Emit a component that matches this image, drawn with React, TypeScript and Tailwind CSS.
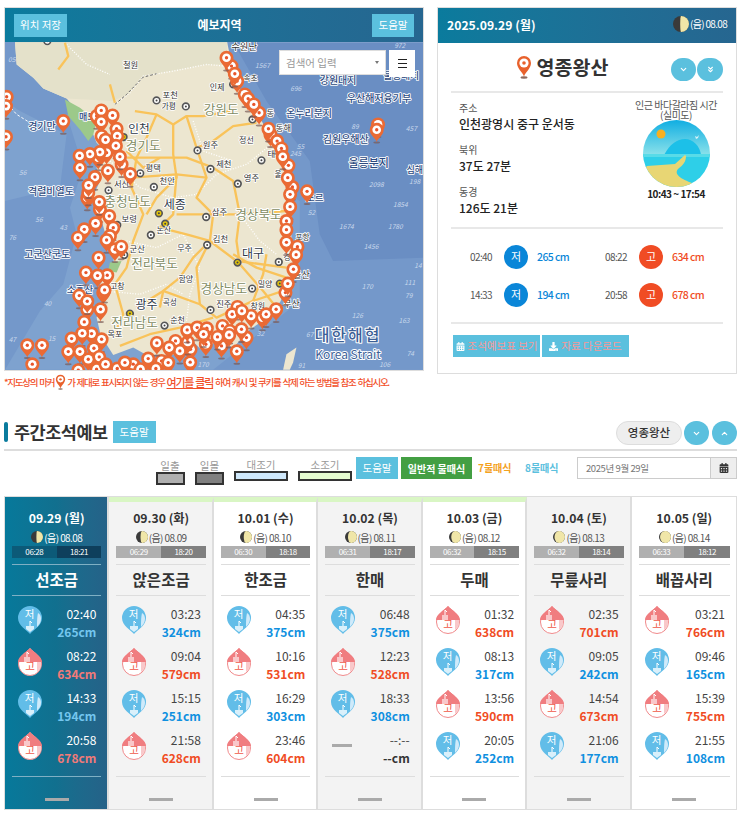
import { ChevronDown, ChevronUp, ChevronsDown } from "lucide-react";
import { FaCalendarAlt, FaDownload } from "react-icons/fa";

const FONT = "font-['Noto_Sans_CJK_KR','Noto_Sans',sans-serif]";

const PINS: [number, number][] = [
  [20, 287], [18, 315], [18, 407], [190, 360], [290, 345], [338, 343], [304, 328], [304, 362], [350, 383], [305, 405], [352, 405], [317, 416],
  [320, 455], [348, 434], [365, 490], [360, 467], [295, 470], [300, 453], [270, 459], [239, 464], [240, 500], [324, 509], [391, 519], [285, 528],
  [262, 590], [265, 575], [266, 553], [300, 625], [298, 603], [328, 645], [287, 667], [253, 685], [234, 710], [340, 680], [330, 705], [320, 717],
  [345, 745], [364, 737], [296, 770], [258, 815], [322, 823], [293, 824], [310, 875], [314, 867], [238, 884], [262, 925], [262, 901], [302, 925], [253, 963],
  [695, 195], [680, 170], [712, 240], [705, 218], [735, 280], [745, 293], [778, 335], [762, 310], [812, 400], [806, 383], [832, 420], [845, 442], [866, 493],
  [849, 467], [878, 558], [864, 530], [871, 580], [871, 617], [860, 660], [860, 686], [893, 737], [860, 724], [889, 761], [881, 805], [857, 875], [864, 848],
  [829, 925], [788, 950], [799, 940], [754, 945], [713, 918], [697, 940], [726, 930], [922, 571], [1135, 370], [1131, 386],
  [82, 1033], [126, 1033], [97, 1090], [215, 1013], [275, 998], [247, 997], [305, 1015], [205, 1052], [282, 1042], [240, 1052], [298, 1068], [265, 1075],
  [235, 1108], [290, 1105], [317, 1090], [352, 1103], [400, 1090], [375, 1085], [422, 1105], [445, 1073], [485, 1080], [468, 1103], [471, 1026], [527, 1020],
  [572, 1045], [540, 1050], [508, 1040], [564, 1023], [505, 1085], [571, 1084], [562, 987], [592, 980], [621, 982], [618, 1030], [611, 1000], [668, 975],
  [665, 1035], [653, 1008], [690, 990], [688, 1002], [740, 1010], [725, 985], [711, 1051],
];

const CITIES: [number, number, boolean][] = [
  [142, 120, false], [700, 250, false], [470, 298, false], [558, 316, false], [758, 355, false], [805, 400, false], [593, 448, false], [632, 504, false],
  [714, 548, false], [785, 478, false], [421, 517, false], [462, 558, false], [326, 568, false], [352, 672, false], [453, 702, false], [619, 648, false],
  [622, 732, false], [373, 762, false], [837, 783, false], [757, 863, false], [632, 927, false], [494, 974, false], [371, 408, true], [477, 637, true],
  [496, 668, true], [713, 785, true], [840, 848, true], [390, 938, true],
];

// x, y, size, text
const CITY_LABELS: [number, number, number, string][] = [
  [733, 137, 28, "수원난"], [392, 193, 25, "철원"], [752, 232, 23, "속초"], [652, 258, 24, "인제"], [511, 282, 25, "포천"], [507, 316, 23, "가평"], [812, 337, 25, "동"],
  [851, 381, 25, "동해"], [740, 416, 24, "정선"], [632, 432, 25, "원주"], [815, 459, 25, "태"], [672, 488, 25, "제천"], [460, 500, 25, "평택"], [755, 530, 25, "영주"],
  [502, 541, 25, "천안"], [835, 520, 23, "울"], [365, 550, 25, "서산"], [388, 654, 25, "보령"], [659, 632, 25, "삼주"], [492, 686, 24, "논산"], [554, 742, 24, "무주"],
  [662, 714, 25, "김천"], [412, 743, 25, "군산"], [558, 834, 24, "함양"], [352, 854, 24, "고창"], [796, 848, 24, "밀양"], [510, 904, 23, "곡성"], [672, 910, 25, "진주"],
  [774, 916, 24, "창원"], [533, 958, 24, "순천"], [345, 1000, 24, "목포"], [905, 822, 27, "울산"], [875, 910, 27, "부산"], [862, 768, 23, "경"], [908, 708, 23, "포항"],
];
const BIG_CITIES: [number, number, number, string][] = [
  [417, 385, 35, "인천"], [525, 613, 36, "세종"], [760, 758, 36, "대구"], [440, 912, 36, "광주"],
];
const PROVINCES: [number, number, string][] = [
  [430, 433, "경기도"], [664, 325, "강원도"], [383, 603, "충청남도"], [776, 642, "경상북도"], [464, 788, "전라북도"], [672, 862, "경상남도"], [404, 965, "전라남도"],
];
const SEA_LABELS: [number, number, number, string][] = [
  [126, 378, 30, "경기만"], [262, 347, 27, "매도"], [153, 572, 30, "격렬비열도"], [142, 762, 30, "고군산군도"], [240, 865, 29, "소흑산"], [1015, 240, 30, "강원대지"],
  [1138, 292, 30, "우산해저융기부"], [928, 337, 30, "온누리분지"], [1038, 417, 30, "김원우해산"], [1107, 489, 33, "울릉분지"], [1205, 225, 29, "울릉대지"], [945, 590, 29, "포르"], [1245, 505, 27, "심해"],
];
const DEPTHS: [number, number, string][] = [
  [788, 195, "1567"], [1200, 135, "972"], [888, 262, "696"], [1066, 378, "89"], [1235, 382, "457"], [902, 436, "55"], [887, 458, "245"], [1130, 550, "2098"], [1245, 543, "198"],
  [68, 515, "56"], [117, 657, "56"], [190, 680, "43"], [37, 710, "76"], [935, 636, "52"], [1202, 612, "1854"], [1040, 678, "1674"], [1187, 677, "1780"], [1114, 737, "1456"],
  [1255, 795, "14"], [1103, 857, "170"], [1230, 845, "111"], [1227, 885, "79"], [143, 907, "40"], [1073, 945, "126"], [1213, 958, "163"], [37, 1015, "47"], [155, 1012, "15"],
  [1232, 1057, "74"], [1155, 1090, "106"], [905, 1095, "91"], [610, 1090, "170"], [782, 997, "32"], [930, 1000, "67"], [35, 175, "05"],
];
const ROADS = [
  "M195 125 L205 165 L175 205", "M330 250 L345 305", "M405 330 L470 340 L520 370 L560 345 L610 345 L690 330",
  "M470 340 L440 410 L410 470 L395 560 L430 640 L400 720 L380 800 L345 850 L370 940 L340 1010",
  "M520 370 L520 460 L530 530 L470 590 L440 640", "M560 345 L590 440 L620 530 L590 590 L640 640 L630 720 L590 800 L600 910",
  "M770 365 L700 375 L640 420 L590 440", "M380 470 L470 470 L560 470 L640 500 L700 540 L720 640 L710 720 L720 790 L790 870 L830 920",
  "M395 530 L530 520 L620 530", "M530 640 L640 640 L720 640 L860 630", "M480 680 L560 700 L630 720 L710 780 L860 800",
  "M630 720 L580 770 L540 830 L490 870 L480 920", "M410 920 L490 870 L600 910 L650 950 L760 900 L850 870", "M360 1035 L450 1000 L540 980 L640 950",
  "M700 760 L770 800 L860 830", "M380 450 L430 500 L480 470", "M760 900 L790 820 L800 760", "M530 520 L520 640 L480 680",
];
const BORDERS = [
  "M345 310 L390 275 L430 225 L520 210 L620 190 L675 195", "M330 480 L420 560 L520 590 L590 580 L650 520 L740 490 L840 410",
  "M580 360 L610 450 L700 480", "M380 720 L470 740 L550 700 L600 800 L570 880 L560 960", "M310 870 L420 880 L500 850 L550 880",
  "M720 640 L780 720 L830 760", "M200 130 L260 190 L330 220",
];

type Tide = { low: boolean; time: string; cm: string };
type Day = { date: string; lunar: string; rx: number; rise: string; set: string; name: string; strip: boolean; tone: string; tides: Tide[] };

const t = (low: boolean, time: string, cm: string): Tide => ({ low, time, cm });
const DAYS: Day[] = [
  { date: "09.29 (월)", lunar: "08.08", rx: 0.8, rise: "06:28", set: "18:21", name: "선조금", strip: false, tone: "today", tides: [t(true, "02:40", "265cm"), t(false, "08:22", "634cm"), t(true, "14:33", "194cm"), t(false, "20:58", "678cm")] },
  { date: "09.30 (화)", lunar: "08.09", rx: 2, rise: "06:29", set: "18:20", name: "앉은조금", strip: true, tone: "bg-[#f3f3f3]", tides: [t(true, "03:23", "324cm"), t(false, "09:04", "579cm"), t(true, "15:15", "251cm"), t(false, "21:58", "628cm")] },
  { date: "10.01 (수)", lunar: "08.10", rx: 3, rise: "06:30", set: "18:18", name: "한조금", strip: true, tone: "bg-white", tides: [t(true, "04:35", "375cm"), t(false, "10:16", "531cm"), t(true, "16:29", "303cm"), t(false, "23:46", "604cm")] },
  { date: "10.02 (목)", lunar: "08.11", rx: 4, rise: "06:31", set: "18:17", name: "한매", strip: true, tone: "bg-[#f3f3f3]", tides: [t(true, "06:48", "375cm"), t(false, "12:23", "528cm"), t(true, "18:33", "308cm")] },
  { date: "10.03 (금)", lunar: "08.12", rx: 5, rise: "06:32", set: "18:15", name: "두매", strip: true, tone: "bg-white", tides: [t(false, "01:32", "638cm"), t(true, "08:13", "317cm"), t(false, "13:56", "590cm"), t(true, "20:05", "252cm")] },
  { date: "10.04 (토)", lunar: "08.13", rx: 6, rise: "06:32", set: "18:14", name: "무릎사리", strip: false, tone: "bg-[#f3f3f3]", tides: [t(false, "02:35", "701cm"), t(true, "09:05", "242cm"), t(false, "14:54", "673cm"), t(true, "21:06", "177cm")] },
  { date: "10.05 (일)", lunar: "08.14", rx: 6.6, rise: "06:33", set: "18:12", name: "배꼽사리", strip: false, tone: "bg-white", tides: [t(false, "03:21", "766cm"), t(true, "09:46", "165cm"), t(false, "15:39", "755cm"), t(true, "21:55", "108cm")] },
];

const MoonIcon = ({ rx, className }: { rx: number; className: string }) => (
  <svg viewBox="0 0 16 16" className={className}>
    <circle cx="8" cy="8" r="8" fill="#3a3a3a" />
    <path d="M8 0a8 8 0 0 1 0 16z" fill="#f0e6a8" />
    <ellipse cx="8" cy="8" rx={rx} ry="8" fill="#f0e6a8" />
  </svg>
);

const PinIcon = ({ className }: { className: string }) => (
  <svg viewBox="0 0 16 24" className={className}>
    <ellipse cx="8" cy="22.5" rx="3.5" ry="1.2" fill="#8d6a5e" />
    <path d="M8 21.5C6.5 17 1 13.5 1 8a7 7 0 0 1 14 0c0 5.500-5.500 9-7 13.500z" fill="#e8612c" />
    <circle cx="8" cy="8" r="4.6" fill="#fff" />
    <circle cx="8" cy="8" r="1.8" fill="#e8612c" />
  </svg>
);

const TideDrop = ({ low }: { low: boolean }) =>
  low ? (
    <svg viewBox="0 0 24 28" className="h-[28px] w-[24px] shrink-0">
      <path d="M12 28C9 24 0 20 0 12a12 12 0 0 1 24 0c0 8-9 12-12 16z" fill="#62bde8" />
      <path d="M20 7c2 1 3 3 3 6 0 3-2 6-4 8 0-5 0-10 1-14z" fill="#cfeafa" />
      <path d="M12 15v5M12 15l2 2" stroke="#fff" strokeWidth="1" fill="none" />
      <path d="M8 20h8v3l-4 3-4-3z" fill="#d9f0fb" />
      <text x="11.500" y="12" textAnchor="middle" fontSize="10.500" fill="#fff">저</text>
    </svg>
  ) : (
    <svg viewBox="0 0 24 28" className="h-[28px] w-[24px] shrink-0">
      <path d="M12 .5C15 4 23.500 8 23.500 16a11.500 11.500 0 0 1-23 0C.5 8 9 4 12 .5z" fill="#fff" stroke="#f0898b" />
      <path d="M12 0C15 4 24 8 24 14H0C0 8 9 4 12 0z" fill="#f07d80" />
      <path d="M19 14h4c.5 4-1 8-4 10z" fill="#f9c8ca" />
      <path d="M9 4v5M9 4l2 2" stroke="#fff" strokeWidth="1" fill="none" />
      <path d="M6 9h6v5H6z" fill="#f9c8ca" />
      <text x="12" y="21.500" textAnchor="middle" fontSize="10.500" fill="#ef5a4a">고</text>
    </svg>
  );

const MapCanvas = () => (
  <svg viewBox="15 123 1255 984" className="h-[328px] w-full block">
    <rect x="15" y="123" width="1255" height="984" fill="#6a8ec3" />
    <path d="M15 123H700L800 300L930 480L960 700L1000 780L1270 770V1107H15z" fill="#7498ca" />
    <path d="M15 600L180 560L200 400L60 330L15 300z M15 1107L120 930L190 850L230 700L210 620L250 500L200 340L400 300L900 600L900 900L640 1107z" fill="#7ea2cf" />
    <path d="M45 123L50 190L100 230L130 262L200 292L240 340L280 400L290 425L312 445L290 500L300 540L280 585L300 640L322 720L342 762L340 800L300 850L312 900L290 950L302 1002L340 1062L400 1040L440 1062L520 1062L560 1002L610 1052L660 1012L700 1042L742 992L800 952L842 902L872 832L882 762L872 682L882 602L872 522L852 462L802 392L772 332L737 282L702 242L692 172L682 123z" fill="#ece6d0" />
    <path d="M45 123L50 190L100 230L130 262L200 292L340 300L390 275L430 225L620 190L680 190L682 123z" fill="#e4e1ca" />
    <path d="M195 295L240 320L290 360L280 400L265 420L240 385L205 345z" fill="#9cc98a" />
    <path d="M330 785L365 780L350 815L325 810z" fill="#9cc98a" />
    <path d="M850 1107L860 1060L890 1040L880 1085L870 1107z" fill="#ece6d0" />
    {BORDERS.map((d) => (
      <path key={d} d={d} fill="none" stroke="#fff" strokeWidth="4" strokeDasharray="3 5" />
    ))}
    <path d="M345 310L380 280L430 228L470 218" fill="none" stroke="#666" strokeWidth="3" strokeDasharray="8 6" />
    <path d="M15 300L50 340L90 365" fill="none" stroke="#fff" strokeWidth="3" strokeDasharray="8 6" />
    {ROADS.map((d) => (
      <path key={d} d={d} fill="none" stroke="#f9c35a" strokeWidth="7" strokeLinejoin="round" />
    ))}
    {DEPTHS.map(([x, y, s]) => (
      <text key={`${x}-${y}`} x={x} y={y + 7} textAnchor="middle" fontSize="20" fontStyle="italic" fill="#c9d8ec">{s}</text>
    ))}
    {SEA_LABELS.map(([x, y, size, s]) => (
      <text key={s} x={x} y={y + 10} textAnchor="middle" fontSize={size} fontWeight="500" fill="#2d4a80" stroke="#fff" strokeWidth="5" paintOrder="stroke" strokeLinejoin="round">{s}</text>
    ))}
    {CITIES.map(([x, y, major]) => (
      <g key={`${x}-${y}`}>
        <circle cx={x} cy={y} r="12" fill="#fff" />
        <circle cx={x} cy={y} r="10" fill={major ? "#e5c60a" : "#fff"} stroke="#555" strokeWidth="5" />
        <circle cx={x} cy={y} r="3" fill="#444" />
      </g>
    ))}
    {CITY_LABELS.map(([x, y, size, s]) => (
      <text key={s} x={x} y={y + 9} textAnchor="middle" fontSize={size} fill="#333" stroke="#fff" strokeWidth="5" paintOrder="stroke" strokeLinejoin="round">{s}</text>
    ))}
    {BIG_CITIES.map(([x, y, size, s]) => (
      <text key={s} x={x} y={y + 12} textAnchor="middle" fontSize={size} fill="#2f3a4a" stroke="#fff" strokeWidth="6" paintOrder="stroke" strokeLinejoin="round">{s}</text>
    ))}
    {PROVINCES.map(([x, y, s]) => (
      <text key={s} x={x} y={y + 13} textAnchor="middle" fontSize="38" fill="#7f8c63" stroke="#fff" strokeWidth="6" paintOrder="stroke" strokeLinejoin="round">{s}</text>
    ))}
    <text x="1045" y="1020" textAnchor="middle" fontSize="48" fontWeight="500" letterSpacing="6" fill="#3d5f96" stroke="#fff" strokeWidth="6" paintOrder="stroke" strokeLinejoin="round">대한해협</text>
    <text x="1045" y="1073" textAnchor="middle" fontSize="36" fill="#3d5f96" stroke="#fff" strokeWidth="6" paintOrder="stroke" strokeLinejoin="round">Korea Strait</text>
    {PINS.map(([x, y]) => (
      <g key={`${x}-${y}`} transform={`translate(${x} ${y})`}>
        <ellipse cx="0" cy="38" rx="10" ry="3" fill="#7b5a55" opacity=".7" />
        <path d="M0 36C-3 27-21 16-21 0a21 21 0 0 1 42 0C21 16 3 27 0 36z" fill="#ea6a34" />
        <circle r="13" fill="#fff" />
        <circle r="5" fill="#e8542a" />
      </g>
    ))}
  </svg>
);

const MapPanel = () => (
  <div className="w-[420px] border border-[#ddd] bg-white">
    <div className="flex h-[34px] items-center justify-between bg-gradient-to-r from-[#0a7b9d] to-[#266690] pl-[9px] pr-[9px]">
      <button className="h-[23px] w-[53px] bg-[#5bc0de] text-[10.500px] text-white">위치 저장</button>
      <span className="text-[12px] font-bold text-white">예보지역</span>
      <button className="h-[23px] w-[42px] bg-[#5bc0de] text-[10.500px] text-white">도움말</button>
    </div>
    <div className="relative">
      <MapCanvas />
      <div className="absolute left-[274px] top-[8px] flex items-start gap-[3px]">
        <div className="flex h-[25px] w-[107px] items-center justify-between border border-[#ddd] bg-white pl-[6px] pr-[6px] text-[10.500px] text-[#999]">
          검색어 입력
          <span className="border-x-[2.500px] border-t-[3px] border-x-transparent border-t-[#777]" />
        </div>
        <div className="flex h-[27px] w-[26px] flex-col items-center justify-center gap-[2.500px] bg-white">
          <span className="h-[1.500px] w-[9px] bg-[#222]" />
          <span className="h-[1.500px] w-[9px] bg-[#222]" />
          <span className="h-[1.500px] w-[9px] bg-[#222]" />
        </div>
      </div>
    </div>
  </div>
);

const BeachPicture = () => (
  <svg viewBox="0 0 67 67" className="h-[67px] w-[67px]">
    <defs>
      <linearGradient id="beachSky" x1="0" y1="0" x2="0" y2="1">
        <stop offset="0" stopColor="#10aee2" />
        <stop offset="1" stopColor="#8fe3ea" />
      </linearGradient>
      <clipPath id="beachClip">
        <circle cx="33.500" cy="33.500" r="33.500" />
      </clipPath>
    </defs>
    <g clipPath="url(#beachClip)">
      <rect width="67" height="36" fill="url(#beachSky)" />
      <circle cx="18" cy="14" r="4.500" fill="#f8b020" />
      <path d="M21 35C27 24 34 19 42 19c8 0 15 7 16 16z" fill="#1cc0e8" />
      <path d="M0 34h67v33H0z" fill="#2ecfe8" />
      <path d="M0 34h67v3H0z" fill="#58dbe8" />
      <path d="M42 35L32 44 4 46 0 50v17h48l4-3C40 60 30 55 35 49 40 45 43 42 43 36z" fill="#e8d674" />
      <path d="M52 16l2 1 2-2-1 3-2 1z" fill="#d8f2f8" />
    </g>
  </svg>
);

const TideCell = ({ low, time, cm }: Tide) => (
  <div className="flex items-center">
    <span className="w-[33px] text-right text-[10px] tracking-[-.6px] text-[#555]">{time}</span>
    <span className={`ml-[12px] flex h-[24px] w-[24px] items-center justify-center rounded-full text-[11px] text-white ${low ? "bg-[#0a86d8]" : "bg-[#f04c24]"}`}>{low ? "저" : "고"}</span>
    <span className={`ml-[9px] text-[10.500px] font-medium tracking-[-.6px] ${low ? "text-[#0a86d8]" : "text-[#f04c24]"}`}>{cm.replace("cm", " cm")}</span>
  </div>
);

const InfoBlock = ({ label, value }: { label: string; value: string }) => (
  <div className="h-[42px]">
    <p className="text-[10px] leading-[16px] text-[#555]">{label}</p>
    <p className="text-[12px] font-medium leading-[16px] text-[#222]">{value}</p>
  </div>
);

const StationPanel = () => (
  <div className="h-[367px] w-[300px] border border-[#ddd] bg-white">
    <div className="flex h-[35px] items-center justify-between bg-gradient-to-r from-[#0a7b9d] to-[#266690] pl-[9px] pr-[9px]">
      <span className="text-[12.200px] font-bold text-white">2025.09.29 (월)</span>
      <span className="mb-[4px] flex items-center gap-[1.500px] text-[10px] tracking-[-.7px] text-white">
        <MoonIcon rx={0.8} className="h-[16px] w-[16px]" />
        (음) 08.08
      </span>
    </div>
    <div className="mx-[13px]">
      <div className="relative flex h-[50px] items-center justify-center border-b-2 border-[#e8e8e8]">
        <div className="mr-[50px] flex items-center gap-[5px]">
          <PinIcon className="h-[24px] w-[16px]" />
          <h2 className="text-[19.500px] font-bold leading-none text-[#333]">영종왕산</h2>
        </div>
        <div className="absolute right-0 top-[15px] flex gap-[1px]">
          <span className="flex h-[23px] w-[25px] items-center justify-center rounded-full bg-[#5bc0de] text-white"><ChevronDown size={9} strokeWidth={3} /></span>
          <span className="flex h-[23px] w-[26px] items-center justify-center rounded-full bg-[#5bc0de] text-white"><ChevronsDown size={9} strokeWidth={3} /></span>
        </div>
      </div>
      <div className="flex h-[136px] border-b-2 border-[#e8e8e8] pl-[8px] pt-[7px]">
        <div className="w-[174px]">
          <InfoBlock label="주소" value="인천광영시 중구 운서동" />
          <InfoBlock label="북위" value="37도 27분" />
          <InfoBlock label="동경" value="126도 21분" />
        </div>
        <div className="flex w-[86px] flex-col items-center">
          <p className="whitespace-nowrap text-center text-[10px] leading-[10px] tracking-[-.5px] text-[#555]">인근 바다갈라짐 시간<br />(실미도)</p>
          <BeachPicture />
          <p className="mt-[-1px] whitespace-nowrap text-[10px] font-bold leading-[15px] tracking-[-.5px] text-[#222]">10:43 ~ 17:54</p>
        </div>
      </div>
      <div className="grid h-[95px] grid-cols-[135px_1fr] content-center gap-y-[14px] border-b-2 border-[#e8e8e8] pl-[8px]">
        <TideCell low time="02:40" cm="265cm" />
        <TideCell low={false} time="08:22" cm="634cm" />
        <TideCell low time="14:33" cm="194cm" />
        <TideCell low={false} time="20:58" cm="678cm" />
      </div>
      <div className="flex gap-[2px] pl-[2px] pt-[11px]">
        <button className="flex h-[22px] w-[87px] items-center justify-center gap-[3px] bg-[#5bc0de] text-[10.500px] text-[#f59a9a]">
          <FaCalendarAlt size={9} className="text-white" />조석예보표 보기
        </button>
        <button className="flex h-[22px] w-[87px] items-center justify-center gap-[3px] bg-[#5bc0de] text-[10.500px] text-[#f59a9a]">
          <FaDownload size={9} className="text-white" />자료 다운로드
        </button>
      </div>
    </div>
  </div>
);

const LegendSwatch = ({ label, boxClass }: { label: string; boxClass: string }) => (
  <div className="flex flex-col items-center">
    <span className="text-[10.500px] leading-[12px] text-[#999]">{label}</span>
    <span className={`border-2 border-[#333] ${boxClass}`} />
  </div>
);

const DayCard = ({ day }: { day: Day }) => {
  const today = day.tone === "today";
  const rule = today ? "border-[#7fb0c4]" : "border-[#ddd]";
  return (
    <div className={`flex h-[312px] flex-col border-r-2 border-r-[#ddd] pl-[7px] pr-[6px] last:border-r-0 ${today ? "bg-gradient-to-r from-[#06799b] via-[#11708f] to-[#256288]" : day.tone} ${day.strip ? "border-t-[5px] border-t-[#d9f6c4] pt-[8px]" : "pt-[13px]"}`}>
      <p className={`text-center text-[12.200px] font-bold leading-[16px] ${today ? "text-white" : "text-[#333]"}`}>{day.date}</p>
      <div className={`mt-[2px] flex h-[18px] items-center justify-center gap-[1px] text-[10px] tracking-[-.6px] ${today ? "text-white" : "text-[#555]"}`}>
        <MoonIcon rx={day.rx} className="h-[12px] w-[12px]" />
        (음) {day.lunar}
      </div>
      <div className="flex h-[12px] text-center text-[8px] leading-[12px] tracking-[-.4px] text-white">
        <span className={`flex-1 ${today ? "bg-[#0c5a78]" : "bg-[#b0b0b0]"}`}>{day.rise}</span>
        <span className={`flex-1 ${today ? "bg-[#0e3f5c]" : "bg-[#808080]"}`}>{day.set}</span>
      </div>
      <div className={`mt-[6px] flex h-[32px] items-center justify-center border-y text-[15.500px] font-bold ${rule} ${today ? "text-white" : "text-[#333]"}`}>{day.name}</div>
      <div className="mt-[10px] flex h-[170px] flex-col gap-[14px]">
        {day.tides.map((tide) => (
          <div key={tide.time} className="flex h-[28px] justify-between pl-[6px] pr-[5px]">
            <TideDrop low={tide.low} />
            <div className="mt-[-1px] text-right">
              <p className={`text-[12px] leading-[18px] ${today ? "text-white" : "text-[#444]"}`}>{tide.time}</p>
              <p className={`text-[12px] font-bold leading-[18px] ${tide.low ? (today ? "text-[#74c6ee]" : "text-[#0f90e0]") : today ? "text-[#f27a78]" : "text-[#f04c24]"}`}>{tide.cm}</p>
            </div>
          </div>
        ))}
        {day.tides.length === 3 && (
          <div className="flex h-[28px] justify-between pl-[6px] pr-[5px]">
            <span className="ml-[1px] mt-[12px] h-[3px] w-[20px] bg-[#aaa]" />
            <div className="mt-[-1px] text-right">
              <p className="text-[12px] leading-[18px] text-[#444]">--:--</p>
              <p className="text-[12px] font-bold leading-[18px] text-[#333]">--cm</p>
            </div>
          </div>
        )}
      </div>
      <div className={`border-t ${rule} pt-[21px]`}>
        <div className="mx-auto h-[3px] w-[24px] bg-[#aaa]" />
      </div>
    </div>
  );
};

export default function App() {
  return (
    <div className={`h-[814px] w-[741px] overflow-hidden bg-white ${FONT}`}>
      <div className="flex items-start gap-[13px] pl-[4px] pt-[7px]">
        <div className="w-[420px]">
          <MapPanel />
          <p className="mt-[3px] flex h-[16px] items-center whitespace-nowrap text-[9.500px] font-medium tracking-[-1.250px] text-[#f2502a] [word-spacing:1px]">
            *지도상의 마커<PinIcon className="mx-[1px] h-[16px] w-[11px]" />가 제대로 표시되지 않는 경우&nbsp;<u className="text-[11px]">여기를 클릭</u>&nbsp;하여 캐시 및 쿠키를 삭제 하는 방법을 참조 하십시오.
          </p>
        </div>
        <StationPanel />
      </div>

      <div className="mx-[4px] mt-[31px] flex h-[30px] items-start justify-between border-b-2 border-[#ddd]">
        <div className="flex items-center">
          <span className="h-[20px] w-[4px] rounded-sm bg-[#0a7b9d]" />
          <h2 className="ml-[6px] text-[17.500px] font-bold leading-[22px] tracking-[-.5px] text-[#333]">주간조석예보</h2>
          <button className="ml-[5px] h-[22px] w-[43px] bg-[#5bc0de] text-[10.500px] text-white">도움말</button>
        </div>
        <div className="flex items-center gap-[2px]">
          <span className="flex h-[24px] w-[66px] items-center justify-center rounded-full border border-[#ddd] bg-[#eee] text-[11.500px] font-medium text-[#333]">영종왕산</span>
          <span className="flex h-[24px] w-[25px] items-center justify-center rounded-full bg-[#5bc0de] text-white"><ChevronDown size={9} strokeWidth={3} /></span>
          <span className="ml-[1px] flex h-[24px] w-[25px] items-center justify-center rounded-full bg-[#5bc0de] text-white"><ChevronUp size={9} strokeWidth={3} /></span>
        </div>
      </div>

      <div className="ml-[155px] mt-[6px] flex h-[39px] items-start">
        <div className="mt-[3px] w-[30px]"><LegendSwatch label="일출" boxClass="h-[13px] w-[29px] bg-[#b0b0b0]" /></div>
        <div className="ml-[10px] mt-[3px] w-[29px]"><LegendSwatch label="일몰" boxClass="h-[13px] w-[29px] bg-[#808080]" /></div>
        <div className="ml-[10px] mt-[2px] w-[54px]"><LegendSwatch label="대조기" boxClass="h-[10px] w-[54px] bg-[#cfe8fb]" /></div>
        <div className="ml-[10px] mt-[2px] w-[54px]"><LegendSwatch label="소조기" boxClass="h-[10px] w-[54px] bg-[#e4fbd0]" /></div>
        <button className="ml-[4px] h-[22px] w-[42px] bg-[#5bc0de] text-[10.500px] text-white">도움말</button>
        <button className="ml-[3px] h-[22px] w-[71px] bg-[#439f43] text-[10px] font-bold text-white">일반적 물때식</button>
        <span className="ml-[6px] w-[32px] whitespace-nowrap text-[10px] font-bold leading-[22px] text-[#f4a21f]">7물때식</span>
        <span className="ml-[15px] w-[32px] whitespace-nowrap text-[10px] font-bold leading-[22px] text-[#5bc0de]">8물때식</span>
        <div className="ml-[20px] flex h-[22px] w-[160px] border border-[#ccc]">
          <span className="flex-1 pl-[8px] text-[9.500px] leading-[20px] tracking-[-.4px] text-[#777]">2025년 9월 29일</span>
          <span className="flex w-[26px] items-center justify-center border-l border-[#ccc] bg-[#eee] text-[#333]"><FaCalendarAlt size={10} /></span>
        </div>
      </div>

      <div className="mx-[4px] grid grid-cols-7 border border-[#ddd]">
        {DAYS.map((day) => (
          <DayCard key={day.date} day={day} />
        ))}
      </div>
    </div>
  );
}
